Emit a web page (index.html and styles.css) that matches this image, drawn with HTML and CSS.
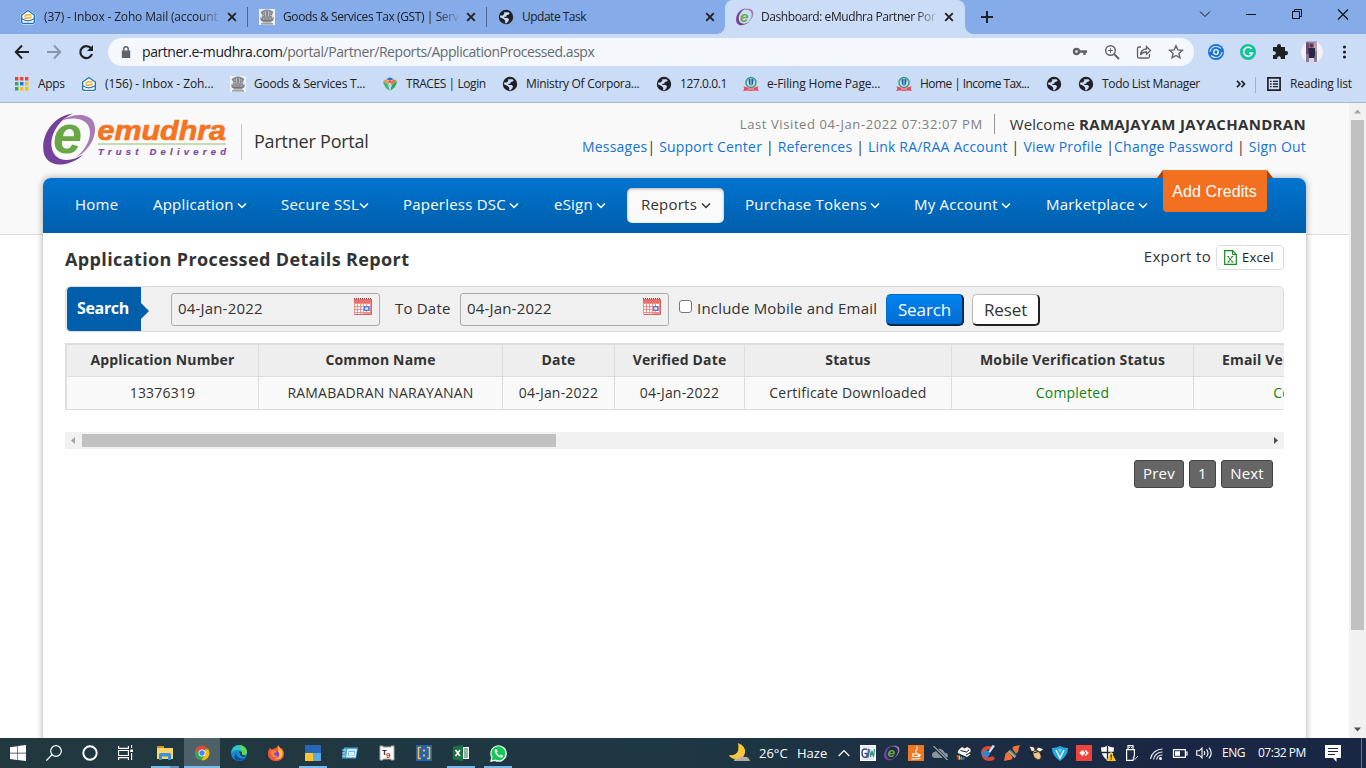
FILE: index.html
```html
<!DOCTYPE html>
<html lang="en">
<head>
<meta charset="utf-8">
<title>Dashboard: eMudhra Partner Portal</title>
<link rel="stylesheet" href="styles.css">
</head>
<body>
<svg class="defs" width="0" height="0">
  <symbol id="x" viewBox="0 0 10 10"><path d="M1.2 1.2l7.6 7.6M8.8 1.2L1.2 8.8" stroke="#202124" stroke-width="1.900" fill="none"/></symbol>
  <symbol id="globe" viewBox="0 0 16 16"><circle cx="8" cy="8" r="7.2" fill="#202124"/><path d="M6.2 3.2h4.3l1.2 1.2-1.4 1.3-1.6.4-.4 1.6H6.4v1.2h3.2l1.4 1.4-.6 1.9-2.2 2.2-1-.2v-2.4L5.600 10 2 8.200l.2-1.800h2.400l1.600-1.500z" fill="#cbdcf6"/></symbol>
  <symbol id="zoho" viewBox="0 0 16 16"><path d="M8 .4L.6 5.600v7.400q0 2.400 2.400 2.400h10q2.400 0 2.400-2.400V5.600z" fill="#fff"/><path d="M8 1.500L1.600 6v6.600q0 1.800 1.800 1.800h9.200q1.800 0 1.800-1.800V6z" fill="#fff" stroke="#1f74b8" stroke-width="1.400"/><path d="M2 9.800q6 4 12 0" fill="none" stroke="#1f74b8" stroke-width="1.300"/><path d="M4.500 7.600q1.500-2.300 4.500-1.800h2.500M11.500 7.600q-1.500 2-4 1.500H4.500" stroke="#f5b233" stroke-width="1.600" fill="none"/></symbol>
  <symbol id="emblem" viewBox="0 0 16 16"><path d="M0 0h16v16H0z" fill="#f0f1f3"/><path d="M4 1.500q4-2 8 0l2.500 1.500-1.500 2.500.5 2H2.500l.5-2L1.500 3zM1 8.500h14l-1 3.500H2zM3.500 12.500h9v1h-9zM2 14.300h12v1.200H2z" fill="#85888e"/><path d="M6.500 2v5.500M9.500 2v5.500M4 4h1.500M10.500 4H12M4 10h1.800M10.200 10H12M7.300 10h1.400M3 6.500h2M11 6.500h2" stroke="#dfe1e6" stroke-width=".6"/><path d="M3 8h10M3.500 12h9" stroke="#54575b" stroke-width=".8"/></symbol>
  <symbol id="tax" viewBox="0 0 16 16"><circle cx="8" cy="6.500" r="5" fill="#c9dfe6" stroke="#3c9a83" stroke-width="1.500"/><path d="M5.500 3.500l2-1v7.500l-1.500-2zM10.500 3.500l-2-1v7.500l1.500-2z" fill="#1859a8"/><path d="M0 15l1.300-2L.5 10.200l4 1.200q3.500.8 7 0l4-1.200-.8 2.800L16 15l-4-.5q-4 .8-8 0z" fill="#e04c61"/><path d="M5 13h6" stroke="#fff" stroke-width=".6"/></symbol>
  <symbol id="chev" viewBox="0 0 10 7"><path d="M1 1.500l4 4 4-4" stroke="currentColor" stroke-width="1.500" fill="none"/></symbol>
  <symbol id="cal" viewBox="0 0 18 17"><path d="M0 1h18v16H0z" fill="#ee8f8c"/><path d="M0 1h18v4H0z" fill="#e9706c"/><path d="M0 .7h18" stroke="#8d4141" stroke-width="1.300" stroke-dasharray="1 1"/><path d="M1 6h2v2H1zM4 6h2v2H4zM7 6h2v2H7zM10 6h2v2h-2zM13 6h3v2h-3zM1 9h2v2H1zM4 9h2v2H4zM7 9h2v2H7zM1 12h2v2H1zM4 12h2v2H4zM7 12h2v2H7zM10 13h2v1h-2zM13 13h3v1h-3zM1 15h2v1H1zM4 15h2v1H4zM7 15h2v1H7z" fill="#fff"/><path d="M10.700 8.700h4v3.600h-4z" fill="#fff" stroke="#5a7ee8" stroke-width="1.400"/><path d="M17.500 2v14.500H1" stroke="#d56564" fill="none"/></symbol>
  <symbol id="em" viewBox="0 0 54 54"><path d="M30 .6C14 2 0 17 .2 35c.2 13 10 18 20.500 16.300C29 50 36 46 40 41.500 33 46 25 48.500 17.500 46 6.500 41.500 6 26 13 15.500 17 9 23 3.500 30 .6z" fill="#74419a"/><path d="M19 7.500C28 1 44-.5 50 8c6.500 12-3 30-17.500 36.500C44 36 50.500 22 45 12 40 4.500 28 4 19 7.500z" fill="#a87bb6"/></symbol>
</svg>

<div class="tabs">
  <div class="tab t1"><svg width="16" height="16"><use href="#zoho"/></svg><span class="ttl">(37) - Inbox - Zoho Mail (account</span><svg class="cl" width="10" height="10"><use href="#x"/></svg></div>
  <div class="tab t2"><svg width="16" height="16"><use href="#emblem"/></svg><span class="ttl">Goods &amp; Services Tax (GST) | Serv</span><svg class="cl" width="10" height="10"><use href="#x"/></svg></div>
  <div class="tab t3"><svg width="16" height="16"><use href="#globe"/></svg><span class="ttl solid">Update Task</span><svg class="cl" width="10" height="10"><use href="#x"/></svg></div>
  <div class="tab active"><svg width="18" height="18" viewBox="0 0 54 54"><use href="#em"/><text x="12" y="42" class="mini-e">e</text></svg><span class="ttl">Dashboard: eMudhra Partner Por</span><svg class="cl" width="10" height="10"><use href="#x"/></svg></div>
  <svg class="plus" width="12" height="12" viewBox="0 0 12 12"><path d="M6 0v12M0 6h12" stroke="#202124" stroke-width="2"/></svg>
  <div class="win">
    <svg width="46" height="28" viewBox="0 0 46 28"><path d="M18 11.500l5 5 5-5" stroke="#111" fill="none"/></svg>
    <svg width="46" height="28" viewBox="0 0 46 28"><path d="M18 14.500h10" stroke="#111"/></svg>
    <svg width="46" height="28" viewBox="0 0 46 28"><path d="M18.500 11.500h7v7h-7zM20.500 11.500v-2h7v7h-2" stroke="#111" fill="none"/></svg>
    <svg width="46" height="28" viewBox="0 0 46 28"><path d="M18 9.500l10 10M28 9.500l-10 10" stroke="#111" fill="none" stroke-width="1.100"/></svg>
  </div>
</div>

<div class="toolbar">
  <svg class="navi" width="96" height="36" viewBox="0 0 96 36"><path d="M29 18H16M22 11.500L15.800 18l6.200 6.500" stroke="#202124" stroke-width="2" fill="none"/><path d="M47 18h13M54 11.500l6.200 6.500-6.200 6.500" stroke="#8795ad" stroke-width="2" fill="none"/><path d="M91 14.300A6 6 0 1 0 92 20" stroke="#202124" stroke-width="2.200" fill="none"/><path d="M93 11v6h-6z" fill="#202124"/></svg>
  <div class="omni">
    <svg class="lock" width="10" height="12" viewBox="0 0 10 12"><path d="M.8 4.500h8.400V12H.8z" fill="#5f6368"/><path d="M2.800 5V3a2.200 2.200 0 0 1 4.400 0v2" fill="none" stroke="#5f6368" stroke-width="1.400"/></svg>
    <span class="url"><b>partner.e-mudhra.com</b>/portal/Partner/Reports/ApplicationProcessed.aspx</span>
    <svg class="omi" width="130" height="28" viewBox="0 0 130 28" fill="none" stroke="#5f6368" stroke-width="1.400"><circle cx="12.500" cy="13.500" r="2.500" stroke-width="2.400"/><path d="M15 13.500h8M20.500 13v4" stroke-width="2.400"/><circle cx="46.500" cy="12.500" r="4.800"/><path d="M50 16l5 5" stroke-width="2"/><path d="M46.500 10.200v4.600M44.200 12.500h4.600" stroke-width="1.100"/><path d="M77 9h-2q-1.500 0-1.500 1.500v8q0 1.500 1.500 1.500h9q1.500 0 1.500-1.500V16M76.500 17q.5-6 6-6V8.500l4 4-4 3.800V14q-4-.2-6 3z" stroke-width="1.300"/><path d="M112 7.700l1.800 4.200 4.600.4-3.500 3.100 1 4.500-3.900-2.400-3.900 2.400 1-4.500-3.500-3.100 4.600-.4z"/></svg>
  </div>
  <svg class="ext" width="164" height="36" viewBox="0 0 164 36"><circle cx="14" cy="18" r="8" fill="#1672d8"/><path d="M8 18q1-5.500 6-5.500 3 0 5 2M20 18q-1 5.500-6 5.500-3 0-5-2" stroke="#d5e8ff" stroke-width="1.200" fill="none"/><circle cx="14" cy="18" r="2.300" fill="none" stroke="#fff" stroke-width="1.300"/><circle cx="46" cy="18" r="8" fill="#15c39a"/><path d="M49.500 14.700a4.500 4.500 0 1 0 1 4.200h-3.500" stroke="#fff" stroke-width="1.500" fill="none"/><path d="M71 13h4v-1a2 2 0 0 1 4 0v1h4v4h1a2.100 2.100 0 0 1 0 4.200h-1V25h-4.200v-1a1.800 1.800 0 0 0-3.600 0v1H71v-4h1a1.900 1.900 0 0 0 0-3.800h-1z" fill="#202124"/><circle cx="110" cy="18" r="11" fill="#f4eff3"/><path d="M104 7.500h11V28h-11z" fill="#917798"/><path d="M104 9h3v11h-3z" fill="#6d4878"/><path d="M112 8.200h3v9h-3z" fill="#b59fba"/><circle cx="109.500" cy="11.500" r="2" fill="#5b3d48"/><path d="M106.500 14h6.500v7l-1 4h-5z" fill="#252843"/><path d="M107 24h5v5h-5z" fill="#d9d4de"/><g fill="#202124"><circle cx="142.500" cy="13" r="1.600"/><circle cx="142.500" cy="18" r="1.600"/><circle cx="142.500" cy="23" r="1.600"/></g></svg>
</div>

<div class="marks">
  <span class="bm b1"><svg width="14" height="14" viewBox="0 0 14 14"><path d="M0 0h3.400v3.400H0zM5 0h3.400v3.400H5zM10 0h3.400v3.400H10z" fill="#ea4335"/><path d="M0 5h3.400v3.400H0zM0 10h3.400v3.400H0z" fill="#34a853"/><path d="M5 5h3.400v3.400H5z" fill="#1a73e8"/><path d="M10 5h3.400v3.400H10zM5 10h3.400v3.400H5zM10 10h3.400v3.400H10z" fill="#fbbc04"/></svg>Apps</span>
  <span class="bm b2"><svg width="16" height="16"><use href="#zoho"/></svg>(156) - Inbox - Zoh...</span>
  <span class="bm b3"><svg width="16" height="16"><use href="#emblem"/></svg>Goods &amp; Services T...</span>
  <span class="bm b4"><svg width="16" height="16" viewBox="0 0 16 16"><path d="M1 5.500q5.500.5 6.500 9Q2 11.500 1 5.500z" fill="#3fb57d"/><path d="M15 5.500q-5.500.5-6.500 9 5.500-3 6.500-9z" fill="#27a869"/><path d="M1 5q2-2 4-1.500 2 2 2.500 6Q4.500 6 1 5z" fill="#f39a38"/><path d="M15 5q-2-2-4-1.500-2 2-2.500 6Q11.500 6 15 5z" fill="#e8743c"/><path d="M4.500 3Q8 0 11.500 3 8 5.500 4.500 3z" fill="#2d76c4"/><circle cx="8" cy="5.500" r="1.500" fill="#e8543c"/></svg>TRACES | Login</span>
  <span class="bm b5"><svg width="16" height="16"><use href="#globe"/></svg>Ministry Of Corpora...</span>
  <span class="bm b6"><svg width="16" height="16"><use href="#globe"/></svg>127.0.0.1</span>
  <span class="bm b7"><svg width="16" height="16"><use href="#tax"/></svg>e-Filing Home Page...</span>
  <span class="bm b8"><svg width="16" height="16"><use href="#tax"/></svg>Home | Income Tax...</span>
  <span class="bm b9"><svg width="16" height="16"><use href="#globe"/></svg></span>
  <span class="bm b10"><svg width="16" height="16"><use href="#globe"/></svg>Todo List Manager</span>
  <span class="bm b11"><svg width="10" height="8" viewBox="0 0 10 8"><path d="M1 .8L4 4 1 7.200M5.500.8l3 3.200-3 3.200" stroke="#202124" stroke-width="1.700" fill="none"/></svg></span>
  <span class="bm b12"><svg width="14" height="14" viewBox="0 0 14 14"><path d="M.9.900h12.200v12.200H.9z" fill="none" stroke="#202124" stroke-width="1.700"/><path d="M3 4.300h1.600M3 7h1.600M3 9.700h1.600M6 4.300h5M6 7h5M6 9.700h5" stroke="#202124" stroke-width="1.300"/></svg>Reading list</span>
</div>

<div class="view">
  <div class="page">
    <header class="head">
      <div class="brand">
        <svg width="190" height="54" viewBox="0 0 190 54"><use href="#em" width="54" height="54"/><text x="10" y="39.800" class="logo-e" textLength="29" lengthAdjust="spacingAndGlyphs">e</text><text x="54.500" y="26.500" class="logo-t" textLength="128.500" lengthAdjust="spacingAndGlyphs">emudhra</text><path d="M55 31h128" stroke="#8fbf6c" stroke-width="1.200"/><text x="55" y="41.500" class="logo-s" textLength="128">Trust Delivered</text></svg>
        <span class="portal">Partner Portal</span>
      </div>
      <div class="who">
        <div class="l1"><span class="last">Last Visited 04-Jan-2022 07:32:07 PM</span><span class="wel">Welcome <b>RAMAJAYAM JAYACHANDRAN</b></span></div>
        <div class="l2"><a>Messages</a>| <a>Support Center</a> | <a>References</a> | <a>Link RA/RAA Account</a> | <a>View Profile</a> |<a>Change Password</a> | <a>Sign Out</a></div>
      </div>
    </header>
    <div class="box">
      <nav class="nav">
        <span>Home</span>
        <span>Application<svg class="sp" width="10" height="7"><use href="#chev"/></svg></span>
        <span>Secure SSL<svg width="10" height="7"><use href="#chev"/></svg></span>
        <span>Paperless DSC<svg class="sp" width="10" height="7"><use href="#chev"/></svg></span>
        <span>eSign<svg class="sp" width="10" height="7"><use href="#chev"/></svg></span>
        <span class="on">Reports<svg class="sp" width="10" height="7"><use href="#chev"/></svg></span>
        <span class="pt">Purchase Tokens<svg class="sp" width="10" height="7"><use href="#chev"/></svg></span>
        <span>My Account<svg class="sp" width="10" height="7"><use href="#chev"/></svg></span>
        <span>Marketplace<svg class="sp" width="10" height="7"><use href="#chev"/></svg></span>
        <div class="credits">Add Credits</div>
      </nav>
      <main class="main">
        <div class="title"><h1>Application Processed Details Report</h1><span class="exp">Export to</span><span class="xls"><svg width="13" height="15" viewBox="0 0 13 15"><path d="M.7.700h7.800l3.800 3.800v9.800H.7z" fill="#fff" stroke="#168a1c" stroke-width="1.200"/><path d="M8.500.700v3.800h3.800" fill="none" stroke="#168a1c"/><path d="M4 6.500l4.500 5.500M8.500 6.500L4 12M3.500 12h2M7.500 12h2M3.500 6.500h1.500M7.500 6.500H9" stroke="#168a1c" stroke-width="1" fill="none"/></svg>Excel</span></div>
        <div class="search">
          <div class="flag">Search</div>
          <div class="date d1">04-Jan-2022<svg width="18" height="17"><use href="#cal"/></svg></div>
          <span class="to">To Date</span>
          <div class="date">04-Jan-2022<svg width="18" height="17"><use href="#cal"/></svg></div>
          <i class="chk"></i><span class="inc">Include Mobile and Email</span>
          <div class="btn go">Search</div>
          <div class="btn rs">Reset</div>
        </div>
        <div class="scroll">
          <div class="table">
            <div class="row th"><span>Application Number</span><span>Common Name</span><span>Date</span><span>Verified Date</span><span>Status</span><span>Mobile Verification Status</span><span>Email Verification Status</span></div>
            <div class="row"><span>13376319</span><span>RAMABADRAN NARAYANAN</span><span>04-Jan-2022</span><span>04-Jan-2022</span><span>Certificate Downloaded</span><span class="ok">Completed</span><span class="ok">Completed</span></div>
          </div>
        </div>
        <div class="hbar"><svg width="17" height="17" viewBox="0 0 17 17"><path d="M10 5v7L6 8.500z" fill="#a3a3a3"/></svg><i class="hthumb"></i><svg class="ra" width="17" height="17" viewBox="0 0 17 17"><path d="M7 5v7l4-3.500z" fill="#505050"/></svg></div>
        <div class="pager"><span class="p1">Prev</span><span class="p2">1</span><span class="p3">Next</span></div>
      </main>
    </div>
  </div>
  <div class="vbar"><svg width="17" height="17" viewBox="0 0 17 17"><path d="M5 10.500h7L8.500 6.500z" fill="#a3a3a3"/></svg><i class="vthumb"></i><svg class="da" width="17" height="17" viewBox="0 0 17 17"><path d="M5 6.500h7L8.500 10.500z" fill="#505050"/></svg></div>
</div>

<footer class="task">
  <div class="apps">
    <i><svg width="16" height="16" viewBox="0 0 16 16"><path d="M0 2.200l7-1v6.500H0zM7.600 1.100L16 0v7.700H7.600zM0 8.400h7v6.500l-7-1zM7.600 8.400H16V16l-8.400-1.100z" fill="#fff"/></svg></i>
    <i><svg width="16" height="16" viewBox="0 0 16 16"><circle cx="10" cy="6" r="5.300" fill="none" stroke="#fff" stroke-width="1.200"/><path d="M6 9.800L.3 15.500" stroke="#fff" stroke-width="1.300"/></svg></i>
    <i><svg width="16" height="16" viewBox="0 0 16 16"><circle cx="8" cy="8" r="6.700" fill="none" stroke="#fff" stroke-width="1.900"/></svg></i>
    <i><svg width="16" height="16" viewBox="0 0 16 16"><path d="M.6 1v2.400h9.800V1M.6 5.500h9.800v5H.6zM.6 15v-2.400h9.800V15M13.600 0v3M13.600 8v7" fill="none" stroke="#fff" stroke-width="1.100"/><path d="M12.200 4.500h2.800v2.500h-2.800z" fill="#fff"/></svg></i>
    <i class="u ex"><svg width="16" height="16" viewBox="0 0 16 16"><path d="M0 1h7v3H0z" fill="#d9950c"/><path d="M0 3h16v11H0z" fill="#fbd669"/><path d="M2 15V9.500Q2 8 3.500 8h9Q14 8 14 9.500V15h-3v-3.500H5V15z" fill="#3b8fdf"/></svg></i>
    <i class="u cur"><svg width="16" height="16" viewBox="0 0 16 16"><circle cx="8" cy="8" r="7.300" fill="#34a853"/><path d="M8 .7a7.300 7.300 0 0 1 6.300 3.600H8L5 9 1.600 4.500A7.300 7.300 0 0 1 8 .7z" fill="#ea4335"/><path d="M14.400 4.400A7.300 7.300 0 0 1 7.500 15.300L11 9.500V4.400z" fill="#fbbc04"/><circle cx="8" cy="8" r="3.500" fill="#fff"/><circle cx="8" cy="8" r="2.700" fill="#4285f4"/></svg></i>
    <i><svg width="16" height="16" viewBox="0 0 16 16"><circle cx="8" cy="8" r="8" fill="#168bd6"/><path d="M0 8Q2-1 10 .2 16 2 16 8q-1 3-6 2.500 2-5-3-5.500Q2 5 0 8z" fill="#38c5bd"/><path d="M9 .1q7 1.500 7 7.500-1 3-6 2.500 2-3 0-5z" fill="#5cd657"/><path d="M5 8q1 6 8 5.500-3 3-7 2-5-3-1-7.500z" fill="#0c4f9a"/><path d="M8 7q3 0 2 2.500.5 1.500 4 1.500" stroke="#22383f" stroke-width="1.700" fill="none"/></svg></i>
    <i><svg width="16" height="16" viewBox="0 0 16 16"><path d="M2 3l2 1.500Q6 3 8 3L10.500 0q0 2 2.500 4l1-1q2 3 2 6a8 7.200 0 0 1-16 0q0-4 2-6z" fill="#ff5438"/><path d="M10.500 0q0 2 3 4.500Q16 9 13 13q-3 2-6 1 4-6 3.500-14z" fill="#ffc335"/><circle cx="7.800" cy="9.500" r="3.500" fill="#8b3ed0"/><path d="M3 6q3-2 6 1l-3 1q0 3 4 3-1 2-4 1.500Q2 10 3 6z" fill="#ff8a28"/></svg></i>
    <i class="u"><svg width="16" height="16" viewBox="0 0 16 16"><path d="M0 0h16v16H0z" fill="#2766b5"/><path d="M0 8h8v8H0z" fill="#ffc62e"/><path d="M8 8h8v8H8z" fill="#5fa7e0"/></svg></i>
    <i><svg width="16" height="16" viewBox="0 0 16 16"><path d="M2 2.500h14l-2 11H0z" fill="#4ba5df"/><path d="M0 5h4M0 8h3M0 11h3" stroke="#b9dcf5"/><path d="M6 5h8l-1 6.500H5zM7.500 7.500h4l-.3 2H7.500z" stroke="#fff" fill="none" stroke-width="1.300"/></svg></i>
    <i><svg width="16" height="16" viewBox="0 0 16 16"><path d="M1 1h3v1h8V1h3v14h-3v-1H4v1H1z" fill="#fff" stroke="#aaa"/><text x="3" y="9.500" class="g9">T</text><text x="7" y="13" class="g9 red">9</text></svg></i>
    <i><svg width="16" height="16" viewBox="0 0 16 16"><path d="M0 0h16v16H0z" fill="#2463b4"/><path d="M5 2.500H2.500v11H5M11 2.500h2.500v11H11" fill="none" stroke="#f3bb2d" stroke-width="1.600"/><path d="M7 4.500h2v2H7zM7 9.500h2v2H7z" fill="#f3bb2d"/></svg></i>
    <i class="u"><svg width="16" height="16" viewBox="0 0 16 16"><path d="M10 2h6v12h-6z" fill="#fff"/><path d="M11 4h4M11 6h4M11 8h4M11 10h4M11 12h4" stroke="#1e7145"/><path d="M0 1.500L10 0v16L0 14.500z" fill="#1e7145"/><path d="M2.500 5l4.500 6M7 5l-4.500 6" stroke="#fff" stroke-width="1.500"/></svg></i>
    <i class="u"><svg width="17" height="17" viewBox="0 0 16 16"><path d="M0 16l1.200-4.200A7.800 7.800 0 1 1 4.500 15z" fill="#fff"/><path d="M1.500 14.500l.9-3A6.600 6.600 0 1 1 4.800 13.700z" fill="#14c756"/><path d="M5.300 4q-1.500 1-.6 3 2 4 5.500 4.800 2 0 2-1.800l-1.900-1-1 1.200q-2-.8-3-2.800l.8-1-.7-2.200z" fill="#fff"/></svg></i>
  </div>
  <div class="tray">
    <svg class="moon" width="22" height="20" viewBox="0 0 22 20"><path d="M10 0q8 3 7 10-2 7-10 6Q2 15 1 12q7 1 9-4 1-4 0-8z" fill="#fbc936"/><path d="M6 18q0-3 4-3 2-4 6-1 4-1 6 4z" fill="#c9b7aa" opacity=".9"/></svg>
    <span class="temp">26°C</span><span class="haze">Haze</span>
    <svg class="up" width="12" height="8" viewBox="0 0 12 8"><path d="M.7 7L6 1.500 11.300 7" fill="none" stroke="#fff" stroke-width="1.200"/></svg>
    <i><svg width="16" height="16" viewBox="0 0 16 16"><path d="M0 0h16v16H0z" fill="#fff"/><path d="M7 4.500Q2 2.500 2 8t5 4V8.500H4.500" stroke="#34408e" stroke-width="1.500" fill="none"/><path d="M8.200 3.500v9" stroke="#34408e" stroke-width="1.200"/><path d="M9.500 4l1 8 1.500-6 1.500 6 1-8" stroke="#2a9a80" stroke-width="1.300" fill="none"/><path d="M2 2h12M2 14h12" stroke="#b5b8d0" stroke-width=".7"/></svg></i>
    <i><svg width="16" height="16" viewBox="0 0 54 54"><use href="#em"/><text x="12" y="42" class="mini-e">e</text></svg></i>
    <i><svg width="16" height="16" viewBox="0 0 16 16"><path d="M0 0h16v16H0z" fill="#ee7722"/><path d="M8.500 1.500q2 2 0 3.500t.3 3M4.500 9h6v2.500H5zM11 9.500q2.500 0 0 2M3.500 13.700q4.500.8 9-.4" stroke="#fff" fill="none" stroke-width="1.100"/></svg></i>
    <i><svg width="16" height="16" viewBox="0 0 16 16"><path d="M3 13q-3 0-3-3t3-3q2-4 6-3 3 1 3.500 3.500Q16 8 16 10.500 16 13 13 13z" fill="#8b949a"/><path d="M1 1l14 14" stroke="#17303c" stroke-width="3"/><path d="M1.500 1l14 14" stroke="#eee"/></svg></i>
    <i><svg width="16" height="16" viewBox="0 0 16 16"><path d="M2 5l4-3.500 3 1.500 2-1.500 4 2v3l-1 1 1 2-4 3-8-3.500-2-1z" fill="#f5f5f5" stroke="#111" stroke-width=".8"/><path d="M4.500 5.500l6 1.500 2.500-2M10 10l4-2" stroke="#222" fill="none"/><path d="M1 10l2 5" stroke="#e53a35" stroke-width="1.600"/><path d="M3 10.500l1 4" stroke="#eedb28" stroke-width="1.400"/><path d="M5 11.500l1 3.500" stroke="#2fc15b" stroke-width="1.400"/><path d="M6.500 12.500l2 1.500" stroke="#2b7be0" stroke-width="1.700"/></svg></i>
    <i><svg width="16" height="16" viewBox="0 0 16 16"><path d="M12 1.500Q2-1 1 7.500 2 16 9 16q5 0 6-3l-3-2q-2 2-4.500 1Q5 11 5 8q1-4 5-3.500z" fill="#db4935"/><path d="M12.500 0l2.500 1-5 7-2-1z" fill="#c9e2f3"/><path d="M2 7q3-3 6-1l2 2q0 3-4 5-4-2-4-6z" fill="#3487cc"/></svg></i>
    <i><svg width="16" height="16" viewBox="0 0 16 16"><path d="M8.500 4q0-3.500 3.500-3l4-1-1.500 4q.5 4-3 4.500zM0 16l1-5q0-3.500 3-4l4.500 5q0 3.500-4 3z" fill="#ee7138"/><path d="M4.500 6l7 6" stroke="#b9a387" stroke-width="2.600"/><path d="M6 5l6 6" stroke="#3e8c78" stroke-width="1.300"/></svg></i>
    <i><svg width="16" height="16" viewBox="0 0 16 16"><path d="M1 1l5 1 1.500 4-4 .5zM8 5l2-3 6 2-4 3z" fill="#f3efe3" stroke="#171717" stroke-width=".7"/><ellipse cx="9" cy="10" rx="3.400" ry="5" transform="rotate(-35 9 10)" fill="#ecc992" stroke="#5a4022" stroke-width=".7"/><path d="M6 8l4-1.500M2 7.500l3 1M13 9l2.500-1M4 11l1.500-.5" stroke="#201b17" stroke-width="1.200"/></svg></i>
    <i><svg width="16" height="16" viewBox="0 0 16 16"><path d="M0 3q5 0 8-2 3 2 8 2 0 8-8 13-8-5-8-13z" fill="#26a7df"/><path d="M4 5l4 8 4-8" stroke="#d6f2fc" stroke-width="1.600" fill="none"/><path d="M6 4h4L8 8z" fill="#71cfef"/></svg></i>
    <i><svg width="16" height="16" viewBox="0 0 16 16"><path d="M0 0h16v16H0z" fill="#ef443b"/><path d="M6.300 5l3 3-3 3-3-3z" fill="#fff"/><path d="M9 5.300L11.700 8 9 10.700" stroke="#fff" stroke-width="1.500" fill="none"/></svg></i>
    <i><svg width="16" height="16" viewBox="0 0 16 16"><path d="M1 2.500q4 0 6.500-2 3 2 6.500 2 0 9-6.500 13Q1 11 1 2.500z" fill="#fff"/><path d="M7.500.500v15M1 7.500h13" stroke="#17283e" stroke-width="1.300"/><path d="M11 6l5 10H6.500z" fill="#fcc51e"/><path d="M11.200 9.500v3.200M11.200 13.500v1.300" stroke="#222" stroke-width="1.200"/></svg></i>
    <i><svg width="16" height="16" viewBox="0 0 16 16"><path d="M4 4.500V.600h5v3.900M2.600 4.600h7.800v5.500L9 15.400H2.600z" fill="none" stroke="#fff" stroke-width="1.200"/><path d="M5 2.500h1M7 2.500h1" stroke="#fff"/><path d="M9 12.500l1.800 2L14 11" stroke="#ccd" fill="none"/></svg></i>
    <i><svg width="16" height="16" viewBox="0 0 16 16"><path d="M2.500 14A12 12 0 0 1 14.500 4M5.500 14.500a9 9 0 0 1 9-7.500M8.500 14.500a6 6 0 0 1 6-4.500" fill="none" stroke="#dfe3e8" stroke-width="1.200"/><circle cx="12.500" cy="13.500" r="1.500" fill="#fff"/></svg></i>
    <i><svg width="16" height="16" viewBox="0 0 16 16"><path d="M1.500 4.600h11.900v7.800H1.500zM13.500 7h1.500v3h-1.500" fill="none" stroke="#fff" stroke-width="1.200"/><path d="M3 6.200h5v4.600H3z" fill="#fff"/></svg></i>
    <i><svg width="17" height="16" viewBox="0 0 17 16"><path d="M.7 5.800h2.500L6 3v10l-2.800-2.800H.7zM8 6q1.500 2 0 4M10.500 4.300q3 3.700 0 7.400M13 2.700q4.500 5.300 0 10.600" fill="none" stroke="#fff" stroke-width="1.100"/></svg></i>
    <span class="eng">ENG</span><span class="time">07:32 PM</span>
    <svg class="note" width="16" height="17" viewBox="0 0 16 17"><path d="M0 0h16v13h-4.500v4L8 13H0z" fill="#fff"/><path d="M3 3.500h10M3 6.500h10M3 9.500h7" stroke="#1a2744" stroke-width="1.200"/></svg>
    <b class="edge"></b>
  </div>
</footer>
</body>
</html>
```
FILE: styles.css
```css
* { box-sizing: border-box; }
body { margin: 0; width: 1366px; height: 768px; overflow: hidden; font-family: "Open Sans", "Noto Sans", sans-serif; color: #333; background: #fff; }
svg { display: block; flex: none; }
i, b.edge { font-style: normal; flex: none; display: block; }
span { white-space: nowrap; }
.defs { position: absolute; }

/* browser tabs */
.tabs { display: flex; height: 34px; background: #85abe8; font-size: 12px; color: #202124; }
.tab { display: flex; align-items: center; height: 34px; width: 239px; padding: 0 0 0 12px; position: relative; }
.t1 { width: 248px; padding-left: 20px; }
.t1::after, .t2::after { content: ""; position: absolute; right: 0; top: 7px; width: 1px; height: 20px; background: #4a6795; }
.t2 { padding-left: 11px; }
.t3 { width: 238px; padding-left: 11px; }
.ttl { width: 175px; margin-left: 8px; padding-bottom: 1px; letter-spacing: -.16px; -webkit-mask-image: linear-gradient(90deg, #000 88%, rgba(0,0,0,.15)); }
.t2 .ttl { letter-spacing: -.4px; }
.ttl.solid { -webkit-mask-image: none; letter-spacing: -.5px; }
.cl { margin-left: 8px; }
.active { width: 240px; background: #cbdcf6; border-radius: 8px 8px 0 0; padding-left: 11px; }
.active .ttl { margin-left: 7px; letter-spacing: -.42px; }
.active::before, .active::after { content: ""; position: absolute; bottom: 0; width: 8px; height: 8px; }
.active::before { left: -8px; background: radial-gradient(circle at 0 0, transparent 7.500px, #cbdcf6 8px); }
.active::after { right: -8px; background: radial-gradient(circle at 100% 0, transparent 7.500px, #cbdcf6 8px); }
.plus { margin: 11px 0 0 16px; }
.win { display: flex; margin-left: auto; }
.mini-e { font: italic bold 46px "Liberation Sans", sans-serif; fill: #68a744; }

/* toolbar */
.toolbar { display: flex; align-items: center; height: 36px; background: #cbdcf6; }
.omni { display: flex; align-items: center; width: 1086px; height: 28px; margin-left: 12px; padding-left: 13px; border-radius: 14px; background: #f4f8fd; }
.url { margin-left: 11px; padding-bottom: 1px; font-size: 14px; letter-spacing: -.44px; color: #666a70; }
.url b { font-weight: 400; color: #202124; }
.omi { margin-left: auto; }
.ext { margin-left: 8px; }

/* bookmarks */
.marks { display: flex; height: 33px; padding: 0 0 5px 15px; background: #cbdcf6; border-bottom: 1px solid #a6b5cd; font-size: 12px; color: #202124; }
.bm { display: flex; align-items: center; gap: 8px; letter-spacing: -.3px; flex: none; }
.b1 { width: 66px; gap: 9px; }
.b2 { width: 149px; letter-spacing: -.08px; }
.b3 { width: 152px; letter-spacing: -.22px; }
.b4 { width: 120px; letter-spacing: -.42px; }
.b5 { width: 154px; }
.b6 { width: 87px; letter-spacing: -.42px; }
.b7 { width: 153px; letter-spacing: -.15px; }
.b8 { width: 150px; letter-spacing: -.57px; }
.b9 { width: 32px; }
.b10 { width: 158px; letter-spacing: -.33px; }
.b11 { width: 20px; }
.b12 { padding-left: 11px; gap: 9px; position: relative; letter-spacing: -.2px; }
.b12::before { content: ""; position: absolute; left: -1px; top: 7px; width: 1px; height: 16px; background: #9fb0cb; }

/* page */
.view { display: flex; height: 635px; overflow: hidden; }
.page { width: 1349px; padding: 0 43px; background: linear-gradient(#f9f9f9 131px, #ddd 131px, #ddd 132px, #fff 132px); }
.head { display: flex; justify-content: space-between; height: 75px; }
.brand { display: flex; align-items: flex-start; padding-top: 10px; }
.logo-e { font: italic bold 51px "Liberation Sans", sans-serif; fill: #68a744; }
.logo-t { font: italic bold 27px "Liberation Sans", sans-serif; fill: #f47423; stroke: #f47423; stroke-width: .7px; }
.logo-s { font: italic bold 9.500px "Liberation Sans", sans-serif; fill: #7d4aa0; stroke: #7d4aa0; stroke-width: .2px; }
.portal { height: 36px; margin: 11px 0 0 8px; padding-left: 12px; border-left: 1px solid #c8c8c8; font-size: 18px; line-height: 34px; letter-spacing: -.22px; }
.who { padding-top: 11px; text-align: right; }
.l1 { display: flex; justify-content: flex-end; height: 20px; line-height: 21px; }
.last { font-size: 13px; letter-spacing: .6px; color: #808080; padding-right: 11px; border-right: 1px solid #999; }
.wel { padding-left: 15px; font-size: 15px; letter-spacing: .1px; }
.wel b { font-weight: 700; letter-spacing: .32px; }
.l2 { font-size: 14px; line-height: 22px; letter-spacing: .21px; margin-top: 2px; }
.l2 a { color: #1573d4; }
.box { height: 570px; background: #fff; border-radius: 8px 8px 0 0; box-shadow: 0 0 7px rgba(0,0,0,.35); }
.nav { display: grid; grid-template-columns: 78px 128px 122px 151px 73px 118px 169px 132px 117px 105px; height: 55px; padding-left: 32px; border-radius: 8px 8px 0 0; background: linear-gradient(#0074cf, #005eab); color: #fff; font-size: 15px; font-weight: 500; letter-spacing: .22px; }
.nav span { display: flex; align-items: center; height: 51px; }
.nav svg { margin-top: 4px; }
.nav svg.sp { margin-left: 3.500px; }
.nav .on { width: 97px; height: 35px; margin: 10px 0 0; padding: 0 0 4px 14px; border-radius: 5px; background: #fafafa; box-shadow: inset 0 1px 3px rgba(0,0,0,.3); color: #333; font-weight: 400; }
.credits { position: relative; top: -8px; width: 104px; height: 42px; margin-left: -.4px; border-radius: 0 0 4px 4px; background: #f37021; font: 16px/44px "Liberation Sans", sans-serif; text-align: center; letter-spacing: .1px; }
.credits::before, .credits::after { content: ""; position: absolute; top: 0; border-bottom: 8px solid #a5440a; }
.credits::before { left: -6px; border-left: 6px solid transparent; }
.credits::after { right: -6px; border-right: 6px solid transparent; }
.main { padding: 11px 22px 0; }
.title { display: flex; height: 42px; }
h1 { margin: 0; font-size: 18px; line-height: 30px; font-weight: 700; flex: 1; letter-spacing: .38px; }
.exp { font-size: 15px; line-height: 25px; font-weight: 500; letter-spacing: .35px; margin-right: 5px; }
.xls { display: flex; align-items: center; gap: 5px; width: 68px; height: 25px; margin-top: 1px; padding: 0 0 1px 7px; border: 1px solid #ddd; border-radius: 4px; font-size: 13px; font-weight: 500; letter-spacing: .2px; color: #222; }
.search { display: flex; width: 1219px; height: 46px; border: 1px solid #ddd; border-radius: 5px; background: #f0f0f0; font-size: 15px; }
.flag { position: relative; width: 74px; height: 44px; margin-left: 1px; padding-left: 10px; border-radius: 4px 0 0 4px; background: #005eab; color: #fff; font-size: 16px; line-height: 43px; font-weight: 700; letter-spacing: -.35px; }
.flag::after { content: ""; position: absolute; left: 74px; top: 16px; border: 8px solid transparent; border-left-color: #005eab; border-right: 0; }
.date { display: flex; justify-content: space-between; width: 209px; height: 33px; margin-top: 6px; padding: 4px 7px 0 6px; border: 1px solid #aaa; border-radius: 3px; line-height: 21px; letter-spacing: .18px; }
.d1 { margin-left: 30px; }
.to { width: 65px; margin: 0 0 0 15px; line-height: 43px; letter-spacing: .2px; }
.chk { width: 13px; height: 13px; margin: 13px 5px 0 10px; border: 1px solid #767676; border-radius: 3px; background: #fff; }
.inc { width: 184px; line-height: 43px; letter-spacing: .2px; margin-right: 5px; }
.btn { height: 32px; margin-top: 7px; border-radius: 5px; font-size: 17px; line-height: 30px; text-align: center; }
.go { width: 78px; background: linear-gradient(#0083f0, #006dd2); color: #fff; border: solid #006dd2; border-width: 1px 2px 2px 1px; border-right-color: #06284a; border-bottom-color: #06284a; font-weight: 500; letter-spacing: -.1px; }
.rs { width: 68px; margin-left: 8px; background: #fff; border: solid #bbb; border-width: 1px 2px 2px 1px; border-right-color: #222; border-bottom-color: #222; letter-spacing: -.1px; }
.scroll { width: 1219px; margin-top: 11px; overflow: hidden; }
.table { width: 1364px; border: 1px solid #ddd; border-width: 2px 2px 0; }
.row { display: grid; grid-template-columns: 192px 244px 112px 130px 207px 242px 233px; height: 33px; border-bottom: 1px solid #ddd; background: #f9f9f9; font-size: 14px; line-height: 31px; text-align: center; letter-spacing: .2px; }
.row span { border-right: 1px solid #ddd; }
.th { height: 32px; background: #eee; font-weight: 700; line-height: 29px; letter-spacing: .16px; }
.row .ok { color: #128212; }
.hbar { display: flex; width: 1219px; height: 17px; margin-top: 22px; background: #f1f1f1; }
.hthumb { width: 474px; height: 13px; margin-top: 2px; background: #c1c1c1; }
.ra { margin-left: auto; }
.pager { display: flex; justify-content: flex-end; gap: 5px; margin: 11px 11px 0 0; }
.pager span { height: 28px; border: 1px solid #444; border-radius: 3px; background: #666; color: #fff; font-size: 15px; line-height: 25px; text-align: center; font-weight: 500; letter-spacing: .2px; }
.p1 { width: 50px; }
.p2 { width: 27px; }
.p3 { width: 52px; }
.vbar { display: flex; flex-direction: column; width: 17px; background: #f1f1f1; }
.vthumb { width: 13px; height: 510px; margin-left: 2px; background: #c1c1c1; }
.da { margin-top: auto; }

/* taskbar */
.task { display: flex; justify-content: space-between; height: 30px; background: linear-gradient(90deg, #22383f, #1e3743 50%, #1a2744 85%); color: #fff; font-size: 12px; }
.apps { display: flex; }
.apps i { display: flex; align-items: center; justify-content: center; width: 37px; height: 30px; padding-right: 1px; }
.apps i:nth-child(-n+3) { width: 36px; padding: 0; }
.apps i:nth-child(4) { width: 35px; margin-right: 4px; padding: 0; }
.apps .u { background: linear-gradient(#76b9ed, #76b9ed) 4px 28px / 28px 2px no-repeat; }
.apps .ex { background: linear-gradient(90deg, #76b9ed 19px, #5c8fb6 19px) 4px 28px / 28px 2px no-repeat; }
.apps .cur { background: linear-gradient(#76b9ed, #76b9ed) 0 28px / 36px 2px no-repeat, linear-gradient(#4f6168, #4f6168) 0 0 / 36px 30px no-repeat; }
.g9 { font: bold 8px "Liberation Sans", sans-serif; fill: #222; }
.g9.red { fill: #d23; }
.tray { display: flex; align-items: center; }
.tray > i { display: flex; align-items: center; justify-content: center; width: 24px; }
.moon { margin-right: 9px; }
.temp { width: 38px; font-size: 13px; letter-spacing: 0; }
.haze { width: 41px; font-size: 13px; letter-spacing: 0; }
.up { margin-right: 6px; }
.eng { width: 36px; padding-left: 6px; letter-spacing: -.5px; }
.time { width: 73px; padding-left: 6px; letter-spacing: -.5px; }
.temp, .haze, .eng, .time { padding-bottom: 1px; }
.note { margin: 0 20px 0 0; }
.edge { width: 1px; height: 30px; margin-right: 4px; background: #67748a; }
```
